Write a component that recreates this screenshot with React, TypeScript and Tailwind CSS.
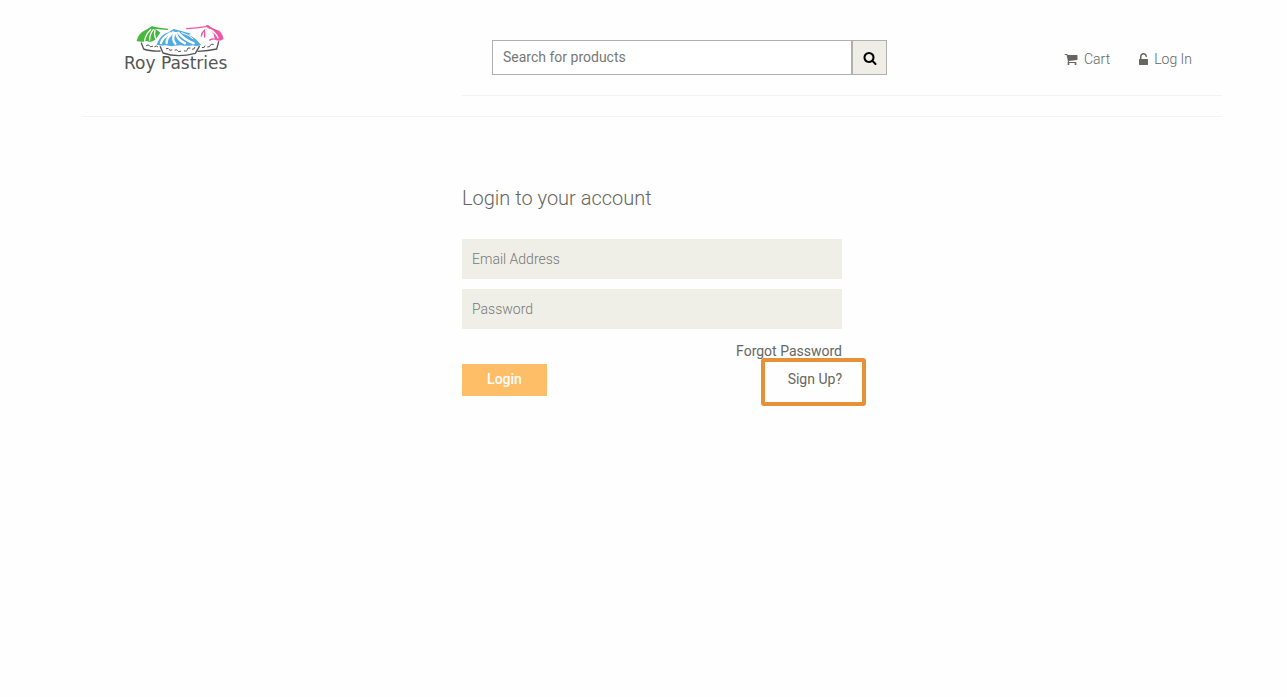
import React from "react";

function CartIcon() {
  return (
    <svg viewBox="0 0 1792 1792" className="h-[14px] w-[14px] fill-current" aria-hidden="true">
      <path d="M704 1536q0 52-38 90t-90 38-90-38-38-90 38-90 90-38 90 38 38 90zm896 0q0 52-38 90t-90 38-90-38-38-90 38-90 90-38 90 38 38 90zm128-1088v512q0 24-16.5 42.5t-40.5 21.5l-1044 122q13 60 13 70 0 16-24 64h920q26 0 45 19t19 45-19 45-45 19h-1024q-26 0-45-19t-19-45q0-11 8-31.5t16-36 21.5-40 15.5-29.5l-177-823h-204q-26 0-45-19t-19-45 19-45 45-19h256q16 0 28.5 6.5t19.5 15.5 13 24.5 8 26 5.5 29.5 4.5 26h1201q26 0 45 19t19 45z" />
    </svg>
  );
}

function UnlockIcon() {
  return (
    <svg viewBox="320 0 1152 1792" className="h-[14px] w-[9px] fill-current" aria-hidden="true">
      <path d="M1376 896q40 0 68 28t28 68v576q0 40-28 68t-68 28h-960q-40 0-68-28t-28-68v-576q0-40 28-68t68-28h32v-320q0-185 131.5-316.5t316.5-131.5 316.5 131.5 131.5 316.5q0 26-19 45t-45 19h-64q-26 0-45-19t-19-45q0-106-75-181t-181-75-181 75-75 181v320h736z" />
    </svg>
  );
}

function SearchIcon() {
  return (
    <svg viewBox="0 0 1792 1792" className="h-[14px] w-[14px] fill-current" aria-hidden="true">
      <path d="M1216 832q0-185-131.5-316.5t-316.5-131.5-316.5 131.5-131.5 316.5 131.5 316.5 316.5 131.5 316.5-131.5 131.5-316.5zm512 832q0 52-38 90t-90 38q-54 0-90-38l-343-342q-179 124-399 124-143 0-273.5-55.5t-225-150-150-225-55.5-273.5 55.5-273.5 150-225 225-150 273.5-55.5 273.5 55.5 225 150 150 225 55.5 273.5q0 220-124 399l343 343q37 37 37 90z" />
    </svg>
  );
}

function PastriesMark() {
  return (
    <svg viewBox="66 27 267 99" className="h-[33px] w-[89px]" fill="none" strokeLinecap="round" strokeLinejoin="round" aria-hidden="true">
      {/* paper cups */}
      <g stroke="#555" strokeWidth="4">
        <path d="M82 84 L89 102 Q108 109 138 108" />
        <path d="M139 95 L147 114 Q190 129 244 115 L256 94" />
        <path d="M252 109 Q284 108 308 102 L314 80" />
        <path strokeWidth="3" d="M97 92q6-5 9 0t10 2M122 95q5-5 9 0M157 101q7-3 8 2t9 2M183 105q7-3 8 2t9 2M211 108q10 1 9-5t8-4M235 103q8 0 8-6M265 98q8 1 8-5M281 96q8 0 8-5t9-3" />
      </g>
      {/* left cream */}
      <path fill="#45b83d" d="M68 78 Q71 62 84 51 Q100 43 114 33 L120 35 Q143 39 163 41 L161 45 Q140 43 124 41 L139 53 L132 63 Q124 78 108 81 Q94 76 88 80 Q76 81 68 78 Z" />
      <path stroke="#fff" strokeWidth="4" d="M110 44 Q95 58 92 76 M118 44 Q106 60 107 75 M123 45 Q119 62 127 73" />
      {/* right cream */}
      <path stroke="#f255a8" strokeWidth="4" d="M218 41 Q250 39 275 35 L281 32 M272 45 Q263 53 262 63 M272 50 L272 66" />
      <path fill="#f255a8" d="M274 34 L283 31 Q294 41 316 47 Q327 58 328 72 Q319 81 303 74 Q293 73 286 79 L286 73 Q297 68 302 71 Q301 51 282 39 Z" />
      <path stroke="#fff" strokeWidth="4" d="M288 43 Q306 53 312 69" />
      {/* centre cream */}
      <path fill="#51abe3" d="M128 89 Q135 68 151 57 Q165 53 179 42 Q207 49 231 56 L224 60 Q243 67 261 89 Q250 96 236 91 Q216 94 201 91 Q185 91 172 94 Q154 89 143 92 Z" />
      <g stroke="#fff" strokeWidth="7">
        <path d="M169 55 Q145 67 141 84" />
        <path d="M177 52 Q156 71 158 84" />
        <path d="M181 54 Q173 75 184 86" />
        <path d="M186 54 Q190 75 213 85" />
        <path d="M193 53 Q211 74 239 85" />
        <path strokeWidth="3" d="M203 53 Q225 59 237 71" />
      </g>
    </svg>
  );
}

export default function App() {
  return (
    <div className="min-h-screen bg-[#fefefe] pl-[17px] font-['Roboto',sans-serif] text-sm text-[#666660]">
      <div className="mx-auto max-w-[1140px]">
        <header className="flex border-b border-[#f2f2f2] pb-5">
          <div className="w-1/3 pt-6">
            <a href="#home" className="ml-[42px] inline-flex flex-col items-start">
              <span className="pl-3">
                <PastriesMark />
              </span>
              <span className="-mt-1 font-['DejaVu_Sans',sans-serif] text-[17px] leading-5 text-[#555]">
                Roy Pastries
              </span>
            </a>
          </div>
          <div className="flex w-2/3 items-start justify-between border-b border-[#f2f2f2] px-[30px] pt-10 pb-5">
            <form role="search" className="flex" onSubmit={(e) => e.preventDefault()}>
              <input
                type="search"
                aria-label="Search for products"
                placeholder="Search for products"
                className="h-[35px] w-[360px] border border-[#b0b0b0] bg-white px-[10px] pb-[2px] text-sm outline-none placeholder:text-[#777]"
              />
              <button
                type="submit"
                aria-label="Search"
                className="flex h-[35px] w-[35px] items-center justify-center border border-[#b0b0b0] bg-[#efeee6] text-black"
              >
                <SearchIcon />
              </button>
            </form>
            <nav className="flex gap-[29px] pt-[9px] font-light">
              <a href="#cart" className="flex items-center gap-[6px] leading-5">
                <CartIcon />
                Cart
              </a>
              <a href="#login" className="flex items-center gap-[6px] leading-5">
                <UnlockIcon />
                Log In
              </a>
            </nav>
          </div>
        </header>

        <main className="mx-auto w-1/3 pt-[69px]">
          <h1 className="text-xl leading-6 font-light">Login to your account</h1>
          <form className="mt-[29px]" onSubmit={(e) => e.preventDefault()}>
            <div className="flex flex-col gap-[10px]">
              <input
                type="email"
                aria-label="Email Address"
                placeholder="Email Address"
                className="h-10 w-full bg-[#f0efe7] px-[10px] text-sm font-light outline-none placeholder:text-[#777]"
              />
              <input
                type="password"
                aria-label="Password"
                placeholder="Password"
                className="h-10 w-full bg-[#f0efe7] px-[10px] text-sm font-light outline-none placeholder:text-[#777]"
              />
            </div>
            <div className="mt-3 flex items-end justify-between">
              <button type="submit" className="-mb-[7px] h-8 w-[85px] bg-[#febd67] pb-[2px] font-medium text-white">
                Login
              </button>
              <div className="flex flex-col items-end gap-2 leading-5">
                <a href="#forgot">Forgot Password</a>
                <a href="#signup" className="relative">
                  Sign Up?
                  <span className="absolute -top-[11px] -right-6 h-12 w-[105px] rounded-[3px] border-4 border-[#e69138]" />
                </a>
              </div>
            </div>
          </form>
        </main>
      </div>
    </div>
  );
}
